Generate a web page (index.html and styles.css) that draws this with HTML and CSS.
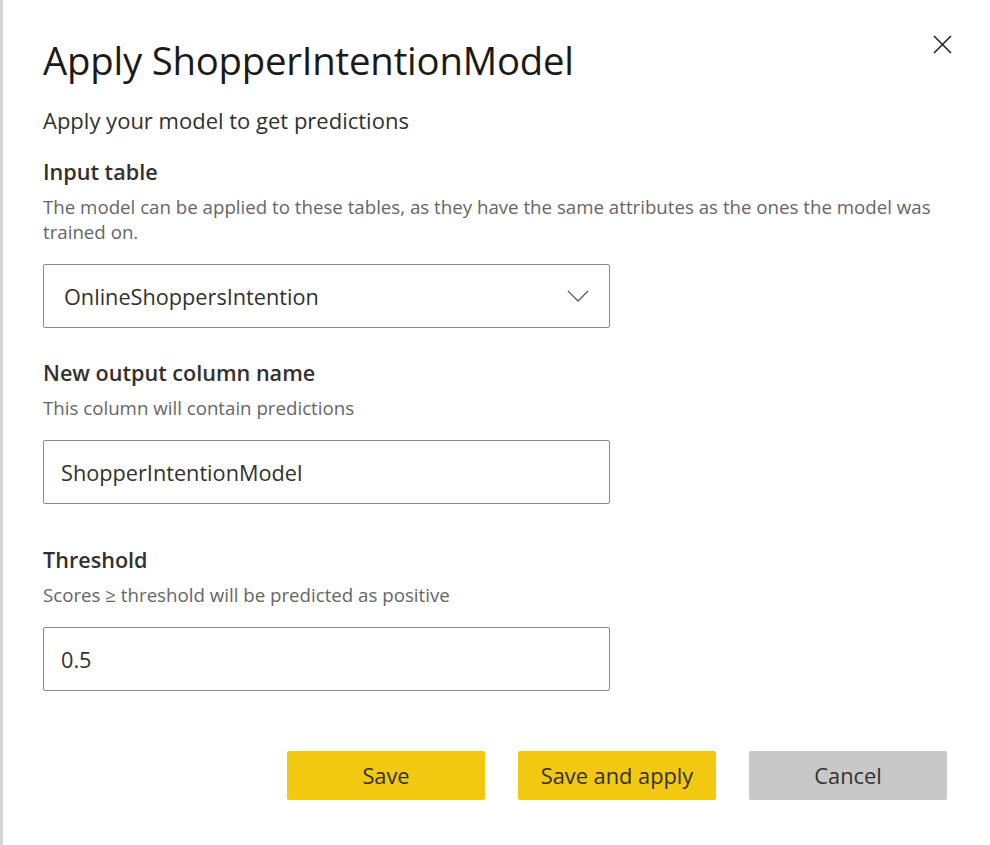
FILE: index.html
```html
<!DOCTYPE html>
<html lang="en">
<head>
<meta charset="utf-8">
<title>Apply ShopperIntentionModel</title>
<link rel="stylesheet" href="styles.css">
</head>
<body>
<div class="dialog">
  <div class="head">
    <h1 class="title">Apply ShopperIntentionModel</h1>
    <button class="close" aria-label="Close">
      <svg width="19" height="19" viewBox="0 0 19 19"><path d="M1 1 L18 18 M18 1 L1 18" stroke="#252423" stroke-width="1.6" fill="none"/></svg>
    </button>
  </div>
  <p class="subtitle">Apply your model to get predictions</p>

  <section class="field">
    <h2 class="label">Input table</h2>
    <p class="desc">The model can be applied to these tables, as they have the same attributes as the ones the model was trained on.</p>
    <div class="control select">
      <span class="value">OnlineShoppersIntention</span>
      <svg class="chevron" width="22" height="12" viewBox="0 0 22 12"><path d="M1 1 L11 11 L21 1" stroke="#605e5c" stroke-width="1.3" fill="none"/></svg>
    </div>
  </section>

  <section class="field">
    <h2 class="label">New output column name</h2>
    <p class="desc">This column will contain predictions</p>
    <div class="control input"><span class="value">ShopperIntentionModel</span></div>
  </section>

  <section class="field field-threshold">
    <h2 class="label">Threshold</h2>
    <p class="desc">Scores ≥ threshold will be predicted as positive</p>
    <div class="control input"><span class="value">0.5</span></div>
  </section>

  <div class="actions">
    <button class="btn btn-primary">Save</button>
    <button class="btn btn-primary">Save and apply</button>
    <button class="btn btn-secondary">Cancel</button>
  </div>
</div>
</body>
</html>
```

FILE: styles.css
```css
html, body {
  margin: 0;
  padding: 0;
  background: #ffffff;
}

body {
  font-family: "Open Sans", "Noto Sans", "Liberation Sans", sans-serif;
  color: #252423;
}

.dialog {
  box-sizing: border-box;
  width: 990px;
  height: 845px;
  border-left: 3px solid #d4d4d4;
  padding: 36px 43px 0 40px;
}

.head {
  display: flex;
  justify-content: space-between;
  align-items: flex-start;
}

.title {
  margin: 0;
  font-size: 38.3px;
  font-weight: 400;
  line-height: 48px;
  color: #1b1a19;
  letter-spacing: -0.2px;
}

.close {
  margin: -1px -5px 0 0;
  padding: 0;
  border: 0;
  background: none;
  width: 19px;
  height: 19px;
  display: flex;
}

.subtitle {
  margin: 22px 0 0;
  font-size: 22px;
  line-height: 28px;
  color: #323130;
}

.field {
  margin-top: 24px;
}

.field + .field {
  margin-top: 31px;
}

.field-threshold.field {
  margin-top: 42px;
}

.label {
  margin: 0;
  font-size: 21.6px;
  font-weight: 600;
  line-height: 28px;
  color: #323130;
}

.desc {
  margin: 8px 0 0;
  font-size: 18.7px;
  line-height: 25px;
  color: #666666;
  max-width: 900px;
}

.control {
  box-sizing: border-box;
  width: 567px;
  height: 64px;
  margin-top: 20px;
  border: 1px solid #8a8886;
  border-radius: 2px;
  display: flex;
  align-items: center;
  font-size: 21.7px;
  color: #323130;
}

.select {
  padding: 0 20px 0 20px;
  justify-content: space-between;
}

.input {
  padding: 0 17px;
}

.chevron {
  display: block;
}

.actions {
  display: flex;
  justify-content: flex-end;
  gap: 33px;
  margin-top: 60px;
}

.btn {
  width: 198px;
  height: 49px;
  border: 0;
  border-radius: 2px;
  font-family: inherit;
  font-size: 21.8px;
  color: #323130;
  padding: 0;
}

.btn-primary {
  background: #f2c811;
}

.btn-secondary {
  background: #c8c8c8;
}
```
